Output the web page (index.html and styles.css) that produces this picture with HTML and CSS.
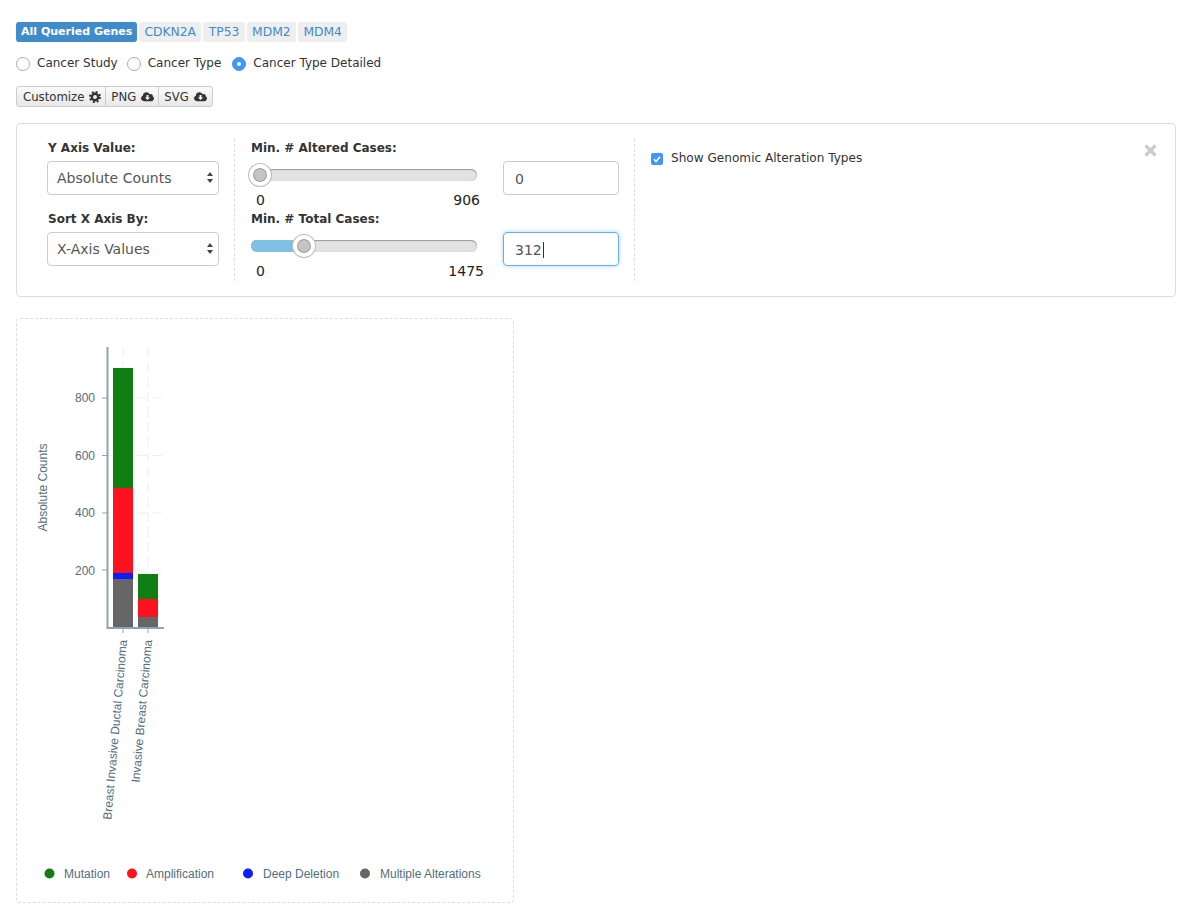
FILE: index.html
```html
<!DOCTYPE html>
<html lang="en">

<head>
    <meta charset="UTF-8">
    <title>Cancer Types Summary</title>
    <link rel="stylesheet" href="styles.css">
</head>

<body>
    <div class="gene-tabs">
        <a class="tab active">All Queried Genes</a>
        <a class="tab">CDKN2A</a>
        <a class="tab">TP53</a>
        <a class="tab">MDM2</a>
        <a class="tab">MDM4</a>
    </div>

    <div class="radios">
        <label class="radio-item"><span class="radio"></span>Cancer Study</label>
        <label class="radio-item"><span class="radio"></span>Cancer Type</label>
        <label class="radio-item"><span class="radio checked"></span>Cancer Type Detailed</label>
    </div>

    <div class="btn-group">
        <button class="btn">Customize
            <svg class="icon" viewBox="0 0 12 12"><circle cx="6" cy="6" r="3.2" fill="none" stroke="#333" stroke-width="2.4"/><circle cx="6" cy="6" r="5" fill="none" stroke="#333" stroke-width="2" stroke-dasharray="2 1.93"/></svg>
        </button>
        <button class="btn">PNG
            <svg class="icon cloud" viewBox="0 0 14 11"><path fill="#333" d="M3.2 10.5C1.4 10.5 0 9.2 0 7.5c0-1.3.8-2.400 2-2.800C2.100 2.700 3.700 1 5.800 1c1.500 0 2.800.8 3.400 2.100.4-.2.800-.3 1.200-.3 1.300 0 2.300 1 2.300 2.200 0 .2 0 .4-.1.500 1 .4 1.400 1.200 1.400 2.100 0 1.500-1.200 2.900-2.900 2.900z"/><path fill="#fff" d="M6 4h2v2.500h1.800L7 9.300 4.200 6.500H6z"/></svg>
        </button>
        <button class="btn">SVG
            <svg class="icon cloud" viewBox="0 0 14 11"><path fill="#333" d="M3.2 10.500C1.400 10.500 0 9.200 0 7.500c0-1.300.8-2.400 2-2.800C2.100 2.700 3.700 1 5.800 1c1.500 0 2.800.8 3.400 2.100.4-.2.800-.3 1.200-.3 1.300 0 2.300 1 2.300 2.200 0 .2 0 .4-.1.500 1 .4 1.400 1.200 1.400 2.100 0 1.500-1.200 2.900-2.900 2.900z"/><path fill="#fff" d="M6 4h2v2.500h1.800L7 9.300 4.200 6.500H6z"/></svg>
        </button>
    </div>

    <div class="panel">
        <svg class="close" viewBox="0 0 13 13"><path d="M1.500 1.500L11.500 11.500M11.500 1.500L1.500 11.500" stroke="#ccc" stroke-width="3.400" fill="none"/></svg>

        <div class="col col-selects">
            <div class="field-label">Y Axis Value:</div>
            <div class="select-wrap">
                <select class="control">
                    <option>Absolute Counts</option>
                </select>
                <span class="arrows"></span>
            </div>
            <div class="field-label second">Sort X Axis By:</div>
            <div class="select-wrap">
                <select class="control">
                    <option>X-Axis Values</option>
                </select>
                <span class="arrows"></span>
            </div>
        </div>

        <div class="col col-sliders">
            <div class="slider-row">
                <div class="slider-block">
                    <div class="field-label">Min. # Altered Cases:</div>
                    <div class="track">
                        <span class="thumb" style="left: 9px"></span>
                    </div>
                    <div class="slider-range"><span>0</span><span class="range-max">906</span></div>
                </div>
                <div class="text-field">0</div>
            </div>
            <div class="slider-row">
                <div class="slider-block">
                    <div class="field-label">Min. # Total Cases:</div>
                    <div class="track">
                        <span class="track-fill" style="width: 53px"></span>
                        <span class="thumb" style="left: 53px"></span>
                    </div>
                    <div class="slider-range"><span>0</span><span class="range-max wide">1475</span></div>
                </div>
                <div class="text-field focused">312<span class="caret"></span></div>
            </div>
        </div>

        <div class="col col-options">
            <label class="check-item">
                <span class="checkbox">
                    <svg viewBox="0 0 12 12"><path d="M3 6.300l2.100 2.200L9 3.800" fill="none" stroke="#fff" stroke-width="1.600"/></svg>
                </span>
                Show Genomic Alteration Types
            </label>
        </div>
    </div>

    <div class="chart-box">
        <svg class="chart" viewBox="17 319 496 583" width="496" height="583">
            <!-- grid -->
            <g stroke="#eceff1" stroke-dasharray="10 5" fill="none">
                <path d="M123 347V628M148 347V628"/>
                <path d="M107 398H163M107 455.500H163M107 513H163M107 570H163"/>
            </g>

            <!-- bars -->
            <rect x="113" y="368" width="20" height="120" fill="#0f7f12"/>
            <rect x="113" y="488" width="20" height="85" fill="#ff1220"/>
            <rect x="113" y="573" width="20" height="6" fill="#0a1fff"/>
            <rect x="113" y="579" width="20" height="48" fill="#666"/>
            <rect x="138" y="574" width="20" height="25" fill="#0f7f12"/>
            <rect x="138" y="599" width="20" height="18" fill="#ff1220"/>
            <rect x="138" y="617" width="20" height="10" fill="#666"/>

            <!-- axes -->
            <path d="M107.500 347V628H164" fill="none" stroke="#90a4ae" stroke-width="2"/>
            <path d="M102 398H107M102 455.500H107M102 513H107M102 570H107M123 628V633M148 628V633" stroke="#90a4ae" fill="none"/>

            <g class="tick-label" text-anchor="end">
                <text x="95" y="402">800</text>
                <text x="95" y="460">600</text>
                <text x="95" y="517">400</text>
                <text x="95" y="575">200</text>
            </g>
            <text class="axis-label" text-anchor="middle" transform="translate(47 487.500) rotate(-90)">Absolute Counts</text>

            <g class="x-label" text-anchor="end">
                <text transform="translate(127 640) rotate(-85)">Breast Invasive Ductal Carcinoma</text>
                <text transform="translate(152 640) rotate(-85)">Invasive Breast Carcinoma</text>
            </g>

            <!-- legend -->
            <circle cx="49.500" cy="873.500" r="5" fill="#0f7f12"/>
            <circle cx="132" cy="873.500" r="5" fill="#ff1220"/>
            <circle cx="248" cy="873.500" r="5" fill="#0a1fff"/>
            <circle cx="365" cy="873.500" r="5" fill="#666"/>
            <g class="legend-label">
                <text x="64" y="877.500">Mutation</text>
                <text x="146" y="877.500">Amplification</text>
                <text x="263" y="877.500">Deep Deletion</text>
                <text x="380" y="877.500">Multiple Alterations</text>
            </g>
        </svg>
    </div>
</body>

</html>
```

FILE: styles.css
```css
body {
    margin: 0;
    padding: 22px 17px 12px 16px;
    background-color: #fff;
    color: #333;
    font-family: "DejaVu Sans", Verdana, sans-serif;
    font-size: 12px;
}

.gene-tabs {
    display: flex;
    gap: 2px;
    height: 20px;
}

.tab {
    padding: 0 5.400px;
    border-radius: 3px;
    background-color: #eee;
    color: #428bca;
    line-height: 20px;
    font-size: 12.300px;
}

.tab.active {
    box-sizing: border-box;
    width: 121px;
    padding: 0 5px;
    background-color: #428bca;
    color: #fff;
    font-weight: bold;
    font-size: 11px;
    white-space: nowrap;
}

.radios {
    display: flex;
    gap: 9px;
    margin-top: 12px;
    height: 18px;
    align-items: center;
}

.radio-item {
    display: flex;
    align-items: center;
    gap: 7px;
}

.radio-item:last-child {
    margin-left: 2px;
}

.radio {
    width: 12px;
    height: 12px;
    border: 1px solid #aaa;
    border-radius: 50%;
    margin-top: 2px;
}

.radio.checked {
    position: relative;
    border-color: #3f97fb;
    background-color: #3f97fb;
}

.radio.checked::after {
    content: "";
    position: absolute;
    left: 4px;
    top: 4px;
    width: 4px;
    height: 4px;
    border-radius: 50%;
    background: #fff;
}

.btn-group {
    display: flex;
    margin-top: 14px;
    height: 21px;
}

.btn {
    display: flex;
    align-items: center;
    gap: 5px;
    margin: 0 0 0 -1px;
    padding: 0 4px 0 5px;
    border: 1px solid #ccc;
    background: linear-gradient(#fafafa, #e8e8e8);
    color: #333;
    font-family: inherit;
    font-size: 11.700px;
}

.btn:first-child {
    margin-left: 0;
    padding-left: 6px;
    border-radius: 3px 0 0 3px;
}

.btn:last-child {
    padding-right: 5px;
    border-radius: 0 3px 3px 0;
}

.icon {
    width: 12px;
    height: 12px;
}

.icon.cloud {
    width: 13px;
    height: 11px;
}

.panel {
    position: relative;
    display: flex;
    box-sizing: border-box;
    height: 174px;
    margin-top: 16px;
    padding: 15px 0 15px 30px;
    border: 1px solid #ddd;
    border-radius: 4px;
}

.close {
    position: absolute;
    top: 20px;
    right: 18px;
    width: 13px;
    height: 13px;
}

.col {
    box-sizing: border-box;
}

.col-selects {
    width: 188px;
    padding-right: 16px;
    border-right: 1px dashed #ddd;
}

.field-label {
    padding: 1px 0 0 1px;
    font-weight: bold;
    font-size: 12px;
    line-height: 16px;
}

.field-label.second {
    margin-top: 15px;
}

.select-wrap {
    position: relative;
    margin-top: 5px;
}

.control {
    display: block;
    width: 172px;
    height: 34px;
    padding: 0 9px;
    border: 1px solid #ccc;
    border-radius: 4px;
    background: #fff;
    color: #555;
    font-family: inherit;
    font-size: 14px;
    appearance: none;
}

.arrows {
    position: absolute;
    top: 11px;
    right: 5px;
    width: 0;
    height: 0;
    border: 3px solid transparent;
    border-top: 0;
    border-bottom: 4px solid #444;
}

.arrows::after {
    content: "";
    position: absolute;
    top: 7px;
    left: -3px;
    border: 3px solid transparent;
    border-bottom: 0;
    border-top: 4px solid #444;
}

.col-sliders {
    width: 400px;
    padding-left: 15px;
    border-right: 1px dashed #ddd;
}

.slider-row {
    display: flex;
    height: 71px;
    gap: 26px;
}

.slider-block {
    width: 227px;
}

.track {
    position: relative;
    height: 12px;
    margin-top: 13px;
    margin-left: 1px;
    border-radius: 6px;
    background: #e2e2e2;
    box-shadow: inset 0 1px 1px #999, inset 0 0 1px #aaa;
}

.track-fill {
    position: absolute;
    left: 0;
    top: 0;
    height: 12px;
    border-radius: 6px 0 0 6px;
    background: #7fc1e3;
}

.thumb {
    position: absolute;
    top: -5px;
    box-sizing: border-box;
    width: 22px;
    height: 22px;
    margin-left: -11px;
    border: 4px solid #fff;
    border-radius: 50%;
    background: #c4c4c4;
    box-shadow: 0 0 0 1px #bbb, inset 0 0 0 1px #999;
}

.slider-range {
    display: flex;
    justify-content: space-between;
    margin-top: 11px;
    padding-left: 6px;
    font-size: 14px;
    line-height: 17px;
    color: #222;
}

.range-max {
    margin-right: -3px;
}

.range-max.wide {
    margin-right: -7px;
}

.text-field {
    box-sizing: border-box;
    width: 116px;
    height: 34px;
    margin-top: 22px;
    padding: 0 11px;
    border: 1px solid #ccc;
    border-radius: 4px;
    color: #555;
    font-size: 14px;
    line-height: 34px;
}

.text-field.focused {
    border-color: #66afe9;
    box-shadow: 0 0 4px rgba(102, 175, 233, 0.6);
}

.caret {
    display: inline-block;
    width: 1px;
    height: 16px;
    margin-left: 1px;
    background: #333;
    vertical-align: -3px;
}

.col-options {
    padding: 12px 0 0 16px;
}

.check-item {
    display: flex;
    align-items: center;
    gap: 8px;
    font-size: 12.100px;
}

.checkbox {
    display: block;
    width: 12px;
    height: 12px;
    margin-top: 1px;
    border-radius: 2px;
    background: #3f97fb;
}

.chart-box {
    box-sizing: border-box;
    width: 498px;
    height: 585px;
    margin-top: 21px;
    border: 1px dashed #ddd;
    border-radius: 4px;
}

.chart {
    display: block;
    font-family: "Liberation Sans", Arial, sans-serif;
    font-size: 12px;
}

.tick-label text,
.axis-label,
.x-label text,
.legend-label text {
    fill: #546e7a;
}
```
